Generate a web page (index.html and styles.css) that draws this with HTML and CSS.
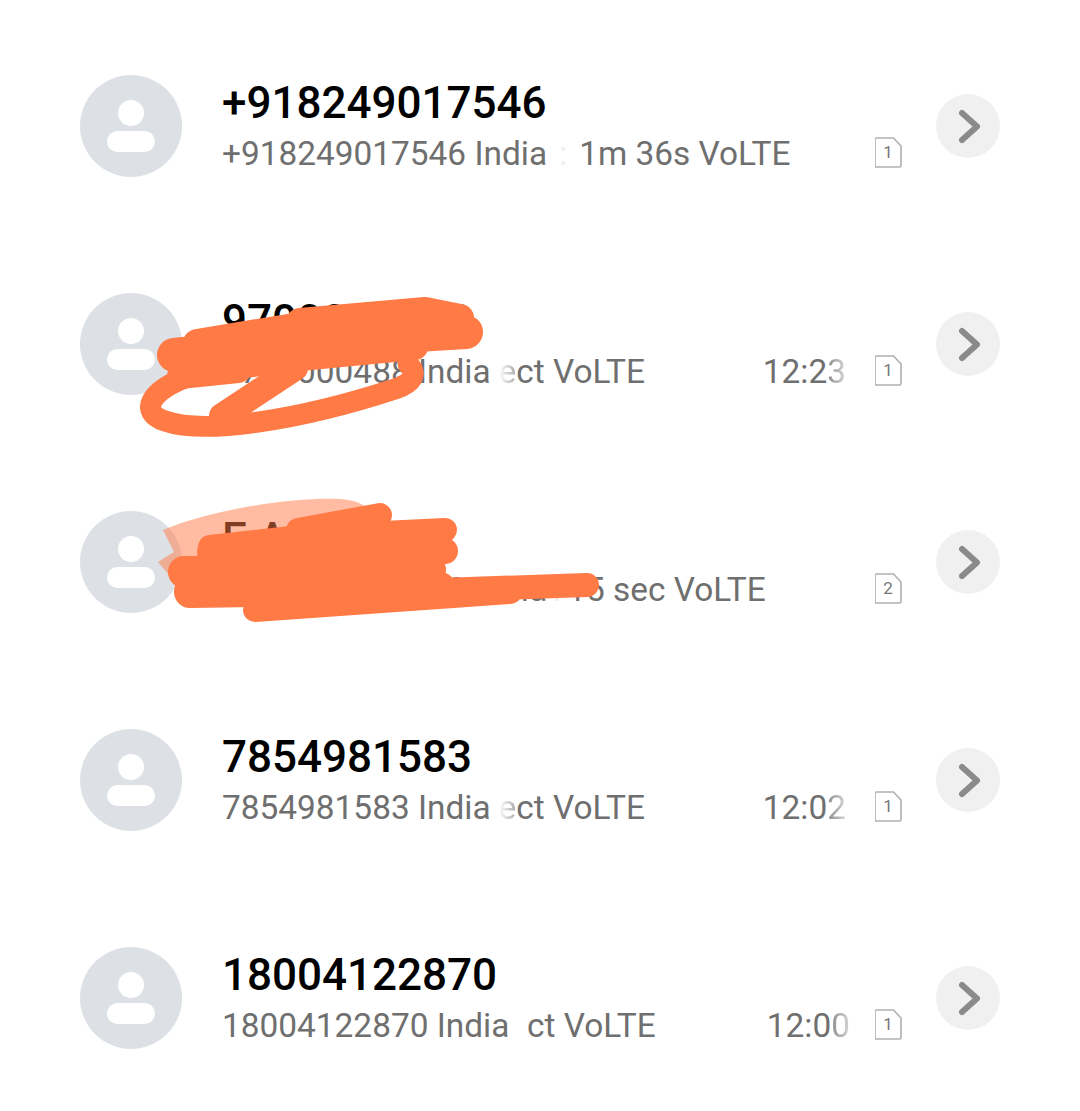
FILE: index.html
```html
<!DOCTYPE html>
<html>
<head>
    <title>Call log</title>
    <link rel="stylesheet" href="styles.css">
</head>
<body>
    <div class="list">
        <div class="row">
            <svg class="avatar" viewBox="0 0 102 102"><circle cx="51" cy="51" r="51" fill="#dde0e5"/><circle cx="51" cy="38" r="13" fill="#fff"/><rect x="27" y="56" width="48" height="21" rx="10.5" fill="#fff"/></svg>
            <div class="info">
                <div class="name">+918249017546</div>
                <div class="sub">
                    <span class="meta">+918249017546 India<span class="gap-a">:</span>1m 36s VoLTE</span>
                    <svg class="sim" viewBox="0 0 27 31"><path d="M1.5 1h17l7.500 8v19.500a1.500 1.500 0 0 1-1.500 1.500h-23a1.500 1.500 0 0 1-1.500-1.500v-26a1.500 1.500 0 0 1 1.500-1.500z" fill="none" stroke="#b0b0b0" stroke-width="1.600"/><text x="13" y="21" text-anchor="middle">1</text></svg>
                </div>
            </div>
            <svg class="more" viewBox="0 0 64 64"><circle cx="32" cy="32" r="32" fill="#f0f0f0"/><path d="M26 19l15 13.500-15 13.500" fill="none" stroke="#8a8a8a" stroke-width="6" stroke-linecap="round" stroke-linejoin="round"/></svg>
        </div>

        <div class="row">
            <svg class="avatar" viewBox="0 0 102 102"><circle cx="51" cy="51" r="51" fill="#dde0e5"/><circle cx="51" cy="38" r="13" fill="#fff"/><rect x="27" y="56" width="48" height="21" rx="10.5" fill="#fff"/></svg>
            <div class="info">
                <div class="name">9700000000</div>
                <div class="sub">
                    <span class="meta">9700000488 India<span class="fade">e</span>ct VoLTE</span>
                    <span class="time">12:2<span class="fade-end">3</span></span>
                    <svg class="sim" viewBox="0 0 27 31"><path d="M1.5 1h17l7.500 8v19.500a1.500 1.500 0 0 1-1.500 1.500h-23a1.500 1.500 0 0 1-1.500-1.500v-26a1.500 1.500 0 0 1 1.500-1.500z" fill="none" stroke="#b0b0b0" stroke-width="1.600"/><text x="13" y="21" text-anchor="middle">1</text></svg>
                </div>
            </div>
            <svg class="more" viewBox="0 0 64 64"><circle cx="32" cy="32" r="32" fill="#f0f0f0"/><path d="M26 19l15 13.500-15 13.500" fill="none" stroke="#8a8a8a" stroke-width="6" stroke-linecap="round" stroke-linejoin="round"/></svg>
        </div>

        <div class="row">
            <svg class="avatar" viewBox="0 0 102 102"><circle cx="51" cy="51" r="51" fill="#dde0e5"/><circle cx="51" cy="38" r="13" fill="#fff"/><rect x="27" y="56" width="48" height="21" rx="10.5" fill="#fff"/></svg>
            <div class="info">
                <div class="name">E A</div>
                <div class="sub">
                    <span class="meta">+910000000000 India<span class="gap-c">:</span>15 sec VoLTE</span>
                    <svg class="sim" viewBox="0 0 27 31"><path d="M1.5 1h17l7.500 8v19.500a1.500 1.500 0 0 1-1.500 1.500h-23a1.500 1.500 0 0 1-1.500-1.500v-26a1.500 1.500 0 0 1 1.500-1.500z" fill="none" stroke="#b0b0b0" stroke-width="1.600"/><text x="13" y="21" text-anchor="middle">2</text></svg>
                </div>
            </div>
            <svg class="more" viewBox="0 0 64 64"><circle cx="32" cy="32" r="32" fill="#f0f0f0"/><path d="M26 19l15 13.500-15 13.500" fill="none" stroke="#8a8a8a" stroke-width="6" stroke-linecap="round" stroke-linejoin="round"/></svg>
        </div>

        <div class="row">
            <svg class="avatar" viewBox="0 0 102 102"><circle cx="51" cy="51" r="51" fill="#dde0e5"/><circle cx="51" cy="38" r="13" fill="#fff"/><rect x="27" y="56" width="48" height="21" rx="10.5" fill="#fff"/></svg>
            <div class="info">
                <div class="name">7854981583</div>
                <div class="sub">
                    <span class="meta">7854981583 India<span class="fade">e</span>ct VoLTE</span>
                    <span class="time">12:0<span class="fade-end">2</span></span>
                    <svg class="sim" viewBox="0 0 27 31"><path d="M1.5 1h17l7.500 8v19.500a1.500 1.500 0 0 1-1.500 1.500h-23a1.500 1.500 0 0 1-1.500-1.500v-26a1.500 1.500 0 0 1 1.500-1.500z" fill="none" stroke="#b0b0b0" stroke-width="1.600"/><text x="13" y="21" text-anchor="middle">1</text></svg>
                </div>
            </div>
            <svg class="more" viewBox="0 0 64 64"><circle cx="32" cy="32" r="32" fill="#f0f0f0"/><path d="M26 19l15 13.500-15 13.500" fill="none" stroke="#8a8a8a" stroke-width="6" stroke-linecap="round" stroke-linejoin="round"/></svg>
        </div>

        <div class="row">
            <svg class="avatar" viewBox="0 0 102 102"><circle cx="51" cy="51" r="51" fill="#dde0e5"/><circle cx="51" cy="38" r="13" fill="#fff"/><rect x="27" y="56" width="48" height="21" rx="10.5" fill="#fff"/></svg>
            <div class="info">
                <div class="name">18004122870</div>
                <div class="sub">
                    <span class="meta">18004122870 India<span class="gap-b">e</span>ct VoLTE</span>
                    <span class="time time-last">12:0<span class="fade-end">0</span></span>
                    <svg class="sim" viewBox="0 0 27 31"><path d="M1.5 1h17l7.500 8v19.500a1.500 1.500 0 0 1-1.500 1.500h-23a1.500 1.500 0 0 1-1.500-1.500v-26a1.500 1.500 0 0 1 1.500-1.500z" fill="none" stroke="#b0b0b0" stroke-width="1.600"/><text x="13" y="21" text-anchor="middle">1</text></svg>
                </div>
            </div>
            <svg class="more" viewBox="0 0 64 64"><circle cx="32" cy="32" r="32" fill="#f0f0f0"/><path d="M26 19l15 13.500-15 13.500" fill="none" stroke="#8a8a8a" stroke-width="6" stroke-linecap="round" stroke-linejoin="round"/></svg>
        </div>
    </div>

    <!-- marker scribbles drawn over the numbers -->
    <svg class="scribble" viewBox="0 0 1080 1111">
        <path class="ink-light" d="M163 530C210 510 290 497 340 499C356 500 366 505 372 512L330 580L182 590L158 562L174 552z"/>

        <path class="ink ink-a" d="M300 322L425 311L460 318"/>
        <path class="ink ink-a" d="M197 343L300 326L460 321"/>
        <path class="ink ink-b" d="M174 355L300 342L466 332"/>
        <path class="ink ink-c" d="M182 373L300 358L415 347"/>
        <path class="ink ink-c" d="M180 376L238 370"/>
        <path class="ink ink-h" d="M295 368L222 416"/>
        <path class="ink ink-d" d="M190 376C150 390 138 412 165 421C205 435 300 420 395 389C413 383 418 374 408 364"/>

        <path class="ink ink-e" d="M298 530L380 515"/>
        <path class="ink ink-e" d="M210 547L300 537L445 530"/>
        <path class="ink ink-f" d="M210 552L445 551"/>
        <path class="ink ink-g" d="M184 572L430 570"/>
        <path class="ink ink-g" d="M190 592L440 588"/>
        <path class="ink ink-e" d="M440 590L587 585"/>
        <path class="ink ink-e" d="M255 610L510 592"/>
    </svg>
</body>
</html>
```

FILE: styles.css
```css
body {
    margin: 0;
    background: #fff;
    font-family: Roboto, sans-serif;
}

.list {
    display: flex;
    flex-direction: column;
    gap: 116px;
    padding: 75px 80px 0 80px;
}

.row {
    display: flex;
    align-items: center;
    height: 102px;
}

.avatar {
    width: 102px;
    height: 102px;
    margin-right: 40px;
    flex: none;
}

.info {
    flex: 1;
    margin-right: 34px;
    margin-bottom: 3px;
    min-width: 0;
}

.name {
    font-size: 44px;
    font-weight: 500;
    line-height: 50px;
    color: #000;
}

.sub {
    display: flex;
    align-items: center;
    height: 36px;
    margin-top: 7px;
    font-size: 33.4px;
    color: #6f6f6f;
}

.meta {
    white-space: nowrap;
}

.gap-a {
    margin: 0 12px;
    color: #eee;
}

.gap-c {
    margin: 0 6px;
    color: #eee;
}

.fade {
    margin-left: 8px;
    background: linear-gradient(90deg, #fff, #aaa);
    -webkit-background-clip: text;
    background-clip: text;
    color: transparent;
}

.gap-b {
    margin-left: 0;
    color: #fff;
}

.time {
    margin-left: auto;
    margin-right: 29px;
}

.time-last {
    margin-right: 25px;
}

.fade-end {
    background: linear-gradient(90deg, #8a8a8a, #d8d8d8);
    -webkit-background-clip: text;
    background-clip: text;
    color: transparent;
}

.sim {
    width: 27px;
    height: 31px;
    margin-left: auto;
    margin-bottom: 2px;
    flex: none;
}

.time + .sim {
    margin-left: 0;
}

.sim text {
    font-family: Roboto, sans-serif;
    font-size: 17px;
    font-weight: 400;
    fill: #777;
}

.more {
    width: 64px;
    height: 64px;
    flex: none;
}

.scribble {
    position: absolute;
    top: 0;
    left: 0;
    width: 1080px;
    height: 1111px;
    pointer-events: none;
}

.ink {
    fill: none;
    stroke: #ff7a45;
    stroke-linecap: round;
    stroke-linejoin: round;
}

.ink-a {
    stroke-width: 28px;
}

.ink-b {
    stroke-width: 34px;
}

.ink-c {
    stroke-width: 26px;
}

.ink-d {
    stroke-width: 21px;
}

.ink-e {
    stroke-width: 24px;
}

.ink-f {
    stroke-width: 26px;
}

.ink-g {
    stroke-width: 32px;
}

.ink-h {
    stroke-width: 26px;
}

.ink-light {
    fill: rgba(255, 122, 69, 0.5);
}
```
